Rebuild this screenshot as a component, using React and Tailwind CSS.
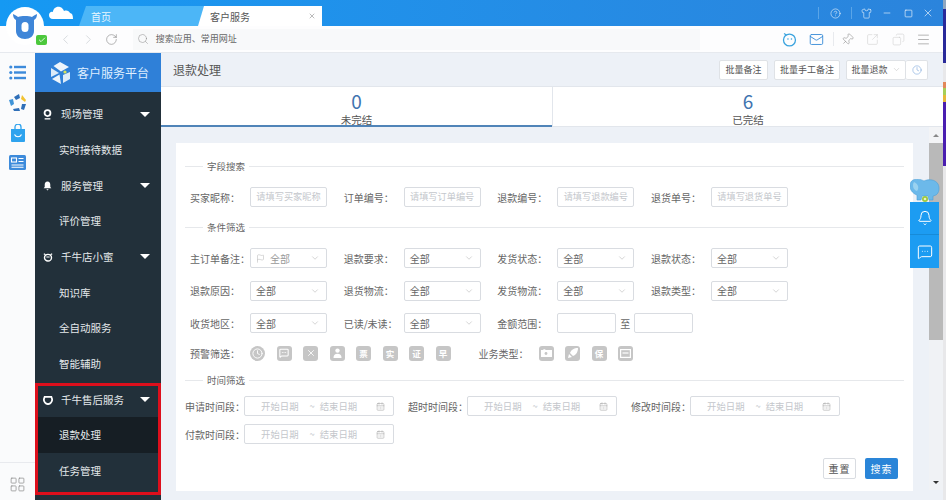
import React from "react";
import {
  ChevronDown, ChevronLeft, ChevronRight, RotateCw, Search, Mail, Pin, SquareArrowOutUpRight, Copy, Menu,
  HelpCircle, Shirt, Minus, Square, X, Clock, Flag, CalendarDays, Bell, MessageSquareMore, LayoutGrid, Check,
} from "lucide-react";

const Tri = () => <span className="ml-auto mr-[11px] h-0 w-0 border-x-[5px] border-t-[5px] border-x-transparent border-t-white" />;

const CamIcon = () => (
  <svg width="9" height="11" viewBox="0 0 11 13"><circle cx="5.5" cy="4.8" r="3.6" fill="none" stroke="#fff" strokeWidth="2.2" /><path d="M2 11h7v1.6H2z" fill="#fff" /></svg>
);
const BellIcon = () => (
  <svg width="9" height="10" viewBox="0 0 11 12"><path d="M5.5 0.5c2.4 0 3.4 1.8 3.4 4v2.7l1.3 1.6H.8l1.3-1.6V4.5c0-2.2 1-4 3.4-4zM4 10h3l-1.5 1.6z" fill="#fff" /></svg>
);
const BotIcon = () => (
  <svg width="10" height="10" viewBox="0 0 12 12"><ellipse cx="6" cy="6.8" rx="4.2" ry="4" fill="none" stroke="#fff" strokeWidth="1.7" /><path d="M1 2.2l2 1.2M11 2.2L9 3.4" stroke="#fff" strokeWidth="1.4" /><path d="M4 6h4" stroke="#fff" strokeWidth="1.2" /></svg>
);
const ShieldIcon = () => (
  <svg width="10" height="10" viewBox="0 0 12 12"><path d="M2 2.2h8l1 3c0 3-2.4 5.4-5 5.8-2.6-.4-5-2.8-5-5.8z" fill="none" stroke="#fff" strokeWidth="2.2" /></svg>
);

const Head = ({ icon, children }) => (
  <div className="flex h-[35.7px] items-center pl-[5px] text-[10.5px] text-[#e4e8ea]">
    <span className="flex w-[15px] justify-center">{icon}</span>
    <span className="ml-[6px]">{children}</span>
    <Tri />
  </div>
);
const Sub = ({ children, active }) => (
  <div className={`flex h-[35.7px] items-center pl-[24px] text-[10.5px] text-[#e4e8ea] ${active ? "bg-[#161e24]" : ""}`}>{children}</div>
);

const Section = ({ children }) => (
  <div className="flex h-[14px] items-center text-[9.5px] text-[#666]">
    <span className="h-px w-[18px] bg-[#e6e8eb]" />
    <span className="mx-[4px]">{children}</span>
    <span className="h-px flex-1 bg-[#e6e8eb]" />
  </div>
);

const Box = "flex h-[20px] shrink-0 items-center rounded-[2px] border border-[#d9dce1] bg-white text-[10px]";
const Field = ({ label, children }) => (
  <div className="flex items-center">
    <span className="w-[60px] shrink-0 whitespace-nowrap text-[10px] text-[#666]">{label}：</span>
    {children}
  </div>
);
const TextIn = ({ ph }) => <div className={`${Box} w-[77px] justify-center whitespace-nowrap !text-[9.2px] text-[#c4c7cc]`}>{ph}</div>;
const Sel = ({ flag }) => (
  <div className={`${Box} w-[77px] pl-[5px] pr-[6px] text-[#666]`}>
    {flag && <Flag size={9} strokeWidth={1.2} className="mr-[5px] text-[#aaa]" />}
    <span className={flag ? "text-[#999]" : ""}>全部</span>
    <ChevronDown size={10} strokeWidth={1.2} className="ml-auto text-[#aaa]" />
  </div>
);
const TimeField = ({ label }) => (
  <div className="flex items-center">
    <span className="w-[59px] shrink-0 whitespace-nowrap text-[10px] text-[#666]">{label}：</span>
    <div className={`${Box} w-[150px] pl-[16px] pr-[8px] !text-[9.4px] text-[#c4c7cc]`}>
      <span>开始日期</span>
      <span className="ml-[11px] mr-[5px]">~</span>
      <span>结束日期</span>
      <CalendarDays size={9} strokeWidth={1.5} className="ml-auto text-[#aaa]" />
    </div>
  </div>
);
const Gray = ({ children, round }) => (
  <span className={`flex h-[15px] w-[15px] items-center justify-center bg-[#c6c6c6] text-[8.5px] font-bold leading-none text-white ${round ? "rounded-full" : "rounded-[3px]"}`}>{children}</span>
);

const TBtn = ({ children, className = "" }) => (
  <div className={`flex h-[20px] items-center justify-center rounded-[2px] border border-[#dfe2e6] bg-white text-[9px] text-[#555] ${className}`}>{children}</div>
);

export default function App() {
  return (
    <div className="relative flex h-[500px] w-[946px] overflow-hidden bg-white font-['Noto_Sans_CJK_SC','Noto_Sans',sans-serif]">
      <div className="flex h-full w-[943px] flex-col">
        {/* title bar */}
        <div className="flex h-[26px] shrink-0 items-end bg-gradient-to-r from-[#1599f3] to-[#2b84dc] pl-[79px]">
          <div className="flex h-[20px] w-[126px] items-center bg-[#4cb6f7] pl-[12px] text-[10px] text-[#e8f6ff] [clip-path:polygon(7px_0,100%_0,100%_100%,0_100%)]">首页</div>
          <div className="-ml-[7px] flex h-[20px] w-[124px] items-center bg-white pl-[12px] pr-[6px] text-[10px] text-[#555] [clip-path:polygon(6px_0,100%_0,100%_100%,0_100%)]">
            客户服务
            <X size={8} className="ml-auto text-[#999]" />
          </div>
          <div className="flex h-[26px] flex-1 items-center justify-end pr-[9px] text-white">
            <span className="h-[12px] w-px bg-[#5aa5e8]" />
            <HelpCircle size={11} strokeWidth={1.2} className="ml-[11px]" />
            <span className="ml-[10px] h-[12px] w-px bg-[#5aa5e8]" />
            <Shirt size={11} strokeWidth={1.2} className="ml-[9px]" />
            <Minus size={10} strokeWidth={1.4} className="ml-[10px]" />
            <Square size={9} strokeWidth={1.6} className="ml-[12px]" />
            <X size={12} strokeWidth={1.2} className="ml-[9px]" />
          </div>
        </div>
        {/* toolbar */}
        <div className="flex h-[27px] shrink-0 items-center border-b border-[#e6e9ee] bg-[#fdfdfe] pl-[58px] pr-[12px]">
          <ChevronLeft size={15} strokeWidth={1} className="text-[#c2c6cc]" />
          <ChevronRight size={15} strokeWidth={1} className="ml-[8px] text-[#c2c6cc]" />
          <RotateCw size={13} strokeWidth={1} className="ml-[9px] text-[#777]" />
          <div className="ml-[15px] flex h-[21px] w-[570px] items-center bg-[#f8f9fa] pl-[4px] text-[9px] text-[#666]">
            <Search size={12} strokeWidth={1} className="mr-[7px] text-[#888]" />
            搜索应用、常用网址
          </div>
          <svg width="15" height="15" viewBox="0 0 15 15" className="ml-[82px]">
            <circle cx="7.5" cy="8" r="6" fill="none" stroke="#3aa3de" strokeWidth="1.3" />
            <circle cx="6" cy="7" r=".8" fill="#3aa3de" /><circle cx="9.5" cy="7" r=".8" fill="#3aa3de" />
            <path d="M2 1.5l2.5 1.5" stroke="#3aa3de" strokeWidth="1.2" />
          </svg>
          <Mail size={15} strokeWidth={1.5} className="ml-[12px] text-[#3d8fd8]" />
          <span className="ml-[9px] h-[14px] w-px bg-[#e8eaee]" />
          <Pin size={13} strokeWidth={1} className="ml-[7px] rotate-45 text-[#888]" />
          <SquareArrowOutUpRight size={13} strokeWidth={1} className="ml-[12px] text-[#ccc]" />
          <Copy size={13} strokeWidth={1} className="ml-[13px] -scale-x-100 text-[#ccc]" />
          <Menu size={15} strokeWidth={1} className="ml-[11px] text-[#888]" />
        </div>
        {/* body */}
        <div className="flex min-h-0 flex-1">
          {/* rail */}
          <div className="flex w-[35px] shrink-0 flex-col items-center bg-[#fafbfc] pt-[12px]">
            <svg width="17" height="15" viewBox="0 0 17 15" fill="#3d8bdb">
              <circle cx="1.8" cy="2" r="1.6" /><circle cx="1.8" cy="7.5" r="1.6" /><circle cx="1.8" cy="13" r="1.6" />
              <rect x="5" y=".8" width="12" height="2.4" /><rect x="5" y="6.3" width="12" height="2.4" /><rect x="5" y="11.8" width="12" height="2.4" />
            </svg>
            <svg width="18" height="18" viewBox="0 0 18 18" className="mt-[14px]">
              <path d="M5 3l5-3 1 4-4 2z" fill="#2f6fb8" />
              <path d="M13 1l4 5-1 2-4-3z" fill="#f2c230" />
              <path d="M17 10l-2 6-3-1 1-5z" fill="#2f6fb8" />
              <path d="M10 14l1 3-6 0-1-2z" fill="#2f6fb8" />
              <path d="M0 6l4-1 1 5-3 2z" fill="#3f94d8" />
            </svg>
            <svg width="16" height="18" viewBox="0 0 16 18" className="mt-[12px]">
              <path d="M1 5h14v12a1 1 0 0 1-1 1H2a1 1 0 0 1-1-1z" fill="#2ea3ee" />
              <path d="M5 5V3a3 3 0 0 1 6 0v2" fill="none" stroke="#2ea3ee" strokeWidth="1.3" />
              <path d="M4.5 10.5c1.5 3 5.5 3 7 0" fill="none" stroke="#fff" strokeWidth="1.2" />
            </svg>
            <svg width="17" height="15" viewBox="0 0 17 15" className="mt-[13px]">
              <rect width="17" height="15" rx="1.5" fill="#3d8bdb" />
              <rect x="2.5" y="3" width="5" height="4" fill="none" stroke="#fff" strokeWidth="1.1" />
              <path d="M9.5 3.5h5M9.5 6.5h5M2.5 10h12M2.5 12.3h12" stroke="#fff" strokeWidth="1.1" />
            </svg>
            <div className="mt-auto flex h-[38px] w-full items-center justify-center border-t border-[#e8eaee] pt-[5px]">
              <LayoutGrid size={17} strokeWidth={1} className="text-[#888]" />
            </div>
          </div>
          {/* sidebar */}
          <div className="flex w-[126px] shrink-0 flex-col bg-[#22303a]">
            <div className="flex h-[39px] shrink-0 items-center bg-[#2f80d8] pl-[15px] text-[12px] text-[#dfeeff]">
              <svg width="21" height="22" viewBox="0 0 21 22" className="mr-[6px]">
                <path d="M10 0l9 5-8 4.5L3.5 4z" fill="#eef5fc" />
                <path d="M1 6l8 5-8 4z" fill="#dcebf9" />
                <path d="M2 17l7.5-4.5L11 22z" fill="#eef5fc" />
                <path d="M13 13l7-3v7l-7 4z" fill="#dcebf9" />
                <circle cx="15" cy="10" r="1.6" fill="#d9e35a" />
              </svg>
              客户服务平台
            </div>
            <div className="h-[4.3px]" />
            <Head icon={<CamIcon />}>现场管理</Head>
            <Sub>实时接待数据</Sub>
            <Head icon={<BellIcon />}>服务管理</Head>
            <Sub>评价管理</Sub>
            <Head icon={<BotIcon />}>千牛店小蜜</Head>
            <Sub>知识库</Sub>
            <Sub>全自动服务</Sub>
            <Sub>智能辅助</Sub>
            <div className="relative">
              <Head icon={<ShieldIcon />}>千牛售后服务</Head>
              <Sub active>退款处理</Sub>
              <Sub>任务管理</Sub>
              <div className="absolute bottom-[-6px] left-0 right-0 top-[1px] border-[3px] border-[#dd0f1c]" />
            </div>
          </div>
          {/* content */}
          <div className="flex min-w-0 flex-1 flex-col bg-[#edf1f7]">
            <div className="flex h-[34px] shrink-0 items-center border-b border-[#e2e6ec] pl-[12px] pr-[15px]">
              <span className="text-[12px] text-[#555]">退款处理</span>
              <TBtn className="ml-auto w-[49px]">批量备注</TBtn>
              <TBtn className="ml-[6px] w-[66px]">批量手工备注</TBtn>
              <TBtn className="ml-[6px] w-[60px]">
                批量退款
                <ChevronDown size={9} strokeWidth={1} className="ml-[4px] text-[#aaa]" />
              </TBtn>
              <TBtn className="w-[22px] border-l-0">
                <Clock size={10} strokeWidth={1.3} className="text-[#6f9fd8]" />
              </TBtn>
            </div>
            <div className="flex h-[40px] shrink-0 bg-white text-center">
              <div className="flex w-[391px] flex-col items-center border-b-2 border-[#5084b8]">
                <span className="mt-[3px] text-[19px] leading-[22px] text-[#3f74b0]">0</span>
                <span className="mt-[2px] text-[10.5px] leading-[11px] text-[#555]">未完结</span>
              </div>
              <div className="flex flex-1 flex-col items-center border-b border-l border-[#e2e6ec]">
                <span className="mt-[3px] text-[19px] leading-[22px] text-[#3f74b0]">6</span>
                <span className="mt-[2px] text-[10.5px] leading-[11px] text-[#555]">已完结</span>
              </div>
            </div>
            <div className="flex min-h-0 flex-1">
              <div className="flex-1 pb-[9px] pl-[15px] pr-[16.4px] pt-[16px]">
                <div className="flex h-full flex-col bg-white pl-[9px] pr-[8.6px] pt-[16px]">
                  <Section>字段搜索</Section>
                  <div className="ml-[5px] mt-[14px] grid grid-cols-[repeat(4,137px)] gap-x-[16.67px]">
                    <Field label="买家昵称"><TextIn ph="请填写买家昵称" /></Field>
                    <Field label="订单编号"><TextIn ph="请填写订单编号" /></Field>
                    <Field label="退款编号"><TextIn ph="请填写退款编号" /></Field>
                    <Field label="退货单号"><TextIn ph="请填写退货单号" /></Field>
                  </div>
                  <div className="mt-[13px]"><Section>条件筛选</Section></div>
                  <div className="ml-[5px] mt-[14px] grid grid-cols-[repeat(4,137px)] gap-x-[16.67px] gap-y-[12.5px]">
                    <Field label="主订单备注"><Sel flag /></Field>
                    <Field label="退款要求"><Sel /></Field>
                    <Field label="发货状态"><Sel /></Field>
                    <Field label="退款状态"><Sel /></Field>
                    <Field label="退款原因"><Sel /></Field>
                    <Field label="退货物流"><Sel /></Field>
                    <Field label="发货物流"><Sel /></Field>
                    <Field label="退款类型"><Sel /></Field>
                    <Field label="收货地区"><Sel /></Field>
                    <Field label="已读/未读"><Sel /></Field>
                    <Field label="金额范围">
                      <div className={`${Box} w-[59px]`} />
                      <span className="mx-[4px] shrink-0 text-[10px] text-[#666]">至</span>
                      <div className={`${Box} w-[59px]`} />
                    </Field>
                  </div>
                  <div className="ml-[5px] mt-[12.5px] flex h-[15px] items-center">
                    <span className="w-[60px] text-[10px] text-[#666]">预警筛选：</span>
                    <div className="flex gap-[11.5px]">
                      <Gray round><Clock size={11} strokeWidth={2} /></Gray>
                      <Gray><MessageSquareMore size={10} strokeWidth={2.5} /></Gray>
                      <Gray><X size={10} strokeWidth={2} /></Gray>
                      <Gray>
                        <svg width="9" height="10" viewBox="0 0 9 10" fill="#fff"><circle cx="4.5" cy="2.6" r="2.2" /><path d="M.5 10c0-3 1.5-4.3 4-4.3s4 1.3 4 4.3z" /></svg>
                      </Gray>
                      <Gray>票</Gray>
                      <Gray>实</Gray>
                      <Gray>证</Gray>
                      <Gray>早</Gray>
                    </div>
                    <span className="ml-[28px] w-[60px] text-[10px] text-[#666]">业务类型：</span>
                    <div className="flex gap-[11.5px]">
                      <Gray>
                        <svg width="11" height="9" viewBox="0 0 11 9"><path d="M0 1h11v7H0zM3 0l2 1H2z" fill="#fff" /><circle cx="5" cy="4.5" r="1.4" fill="#c6c6c6" /></svg>
                      </Gray>
                      <Gray>
                        <svg width="10" height="10" viewBox="0 0 10 10"><path d="M10 0C6 0 3 2 2 5l3 3c3-1 5-4 5-8zM1 6l3 3-4 1z" fill="#fff" /></svg>
                      </Gray>
                      <Gray>保</Gray>
                      <Gray>
                        <svg width="11" height="9" viewBox="0 0 11 9"><rect x=".6" y=".6" width="9.8" height="7.8" fill="none" stroke="#fff" strokeWidth="1.2" /><path d="M2.5 4h6" stroke="#fff" strokeWidth="1.2" /></svg>
                      </Gray>
                    </div>
                  </div>
                  <div className="mt-[12.5px]"><Section>时间筛选</Section></div>
                  <div className="mt-[9px] grid grid-cols-[repeat(3,209px)] gap-x-[14px] gap-y-[8px]">
                    <TimeField label="申请时间段" />
                    <TimeField label="超时时间段" />
                    <TimeField label="修改时间段" />
                    <TimeField label="付款时间段" />
                  </div>
                  <div className="mr-[6px] mt-[14px] flex justify-end gap-[9px]">
                    <div className="flex h-[21px] w-[33px] items-center justify-center rounded-[2px] border border-[#d9dce1] text-[10px] tracking-[1px] text-[#555]">重置</div>
                    <div className="flex h-[21px] w-[33px] items-center justify-center rounded-[2px] bg-[#2a85d8] text-[10px] tracking-[1px] text-white">搜索</div>
                  </div>
                </div>
              </div>
              {/* scrollbar */}
              <div className="flex w-[14px] shrink-0 flex-col items-center">
                <div className="flex h-[16px] w-full shrink-0 items-center justify-center bg-[#f3f4f6]">
                  <span className="h-0 w-0 border-x-[3px] border-b-[3px] border-x-transparent border-b-[#888]" />
                </div>
                <div className="h-[197px] w-full shrink-0 bg-[#b9b9b9]" />
                <div className="flex h-[150px] w-full items-end justify-center bg-[#f0f2f5] pb-[6px]">
                  <span className="h-0 w-0 border-x-[3px] border-t-[3px] border-x-transparent border-t-[#333]" />
                </div>
              </div>
            </div>
          </div>
        </div>
      </div>
      {/* desktop peeking out */}
      <div className="flex h-full w-[3px] flex-col bg-[#e8e8ea]">
        <div className="h-[9px] bg-[#8fa7c0]" />
        <div className="h-[54px] bg-[#2a2a9a]" />
        <div className="h-[19px] bg-[#e8e8ea]" />
        <div className="h-[6px] bg-[#e2885a]" />
        <div className="h-[7px] bg-[#a6cf58]" />
        <div className="h-[7px] bg-[#e6b83a]" />
        <div className="h-[64px] bg-[#4a1eb0]" />
      </div>

      {/* avatar */}
      <div className="absolute left-[6px] top-[7px] flex h-[38px] w-[38px] items-center justify-center rounded-full bg-white">
        <svg width="28" height="28" viewBox="0 0 28 28">
          <path d="M2 2c0 3 1 5 3 6v11c0 5 4 8 9 8s9-3 9-8V8c2-1 3-3 3-6-2 1-4 2-5 3-2-1-4-1-7-1s-5 0-7 1C6 4 4 3 2 2z" fill="#3f86d8" />
          <rect x="10.5" y="10" width="7" height="10" rx="3.5" fill="#fff" />
        </svg>
      </div>
      <div className="absolute left-[36px] top-[35px] flex h-[10px] w-[11px] items-center justify-center rounded-[2px] bg-[#4cc83c]">
        <Check size={8} strokeWidth={2.5} className="text-white" />
      </div>
      {/* cloud */}
      <svg width="24" height="14" viewBox="0 0 24 14" className="absolute left-[49px] top-[6px]">
        <path d="M4 13c-3 0-4-2-4-4s2-4 4-3c0-3 3-6 7-5 2 .5 3 2 4 4 3-1 5 0 6 2 2 0 3 2 3 6z" fill="#fff" />
      </svg>
      {/* floating widget */}
      <div className="absolute left-[910px] top-[179px] flex w-[29px] flex-col">
        <svg width="30" height="23" viewBox="0 0 30 23">
          <path d="M3 1c5-2 9 0 11 1 4-2 11-2 14 3 2 4 1 9-2 11l-3 1v4h-4l-1-4h-6l-1 4H7v-5C4 15 0 12 0 7c0-3 1-5 3-6z" fill="#6cb9ea" stroke="#4a9fd8" strokeWidth=".6" />
          <path d="M4 3c-2 3-1 8 3 9 2-2 2-7-3-9z" fill="#9ad2f0" />
          <circle cx="15" cy="20" r="3" fill="#9bc83c" />
          <circle cx="15" cy="20" r="1.3" fill="#e9efc0" />
        </svg>
        <div className="flex h-[33px] items-center justify-center border-b border-[#178bd8] bg-[#1c9cf2]">
          <Bell size={16} strokeWidth={1.5} className="text-white" />
        </div>
        <div className="flex h-[33px] items-center justify-center bg-[#1c9cf2]">
          <MessageSquareMore size={16} strokeWidth={1.5} className="text-white" />
        </div>
      </div>
    </div>
  );
}
